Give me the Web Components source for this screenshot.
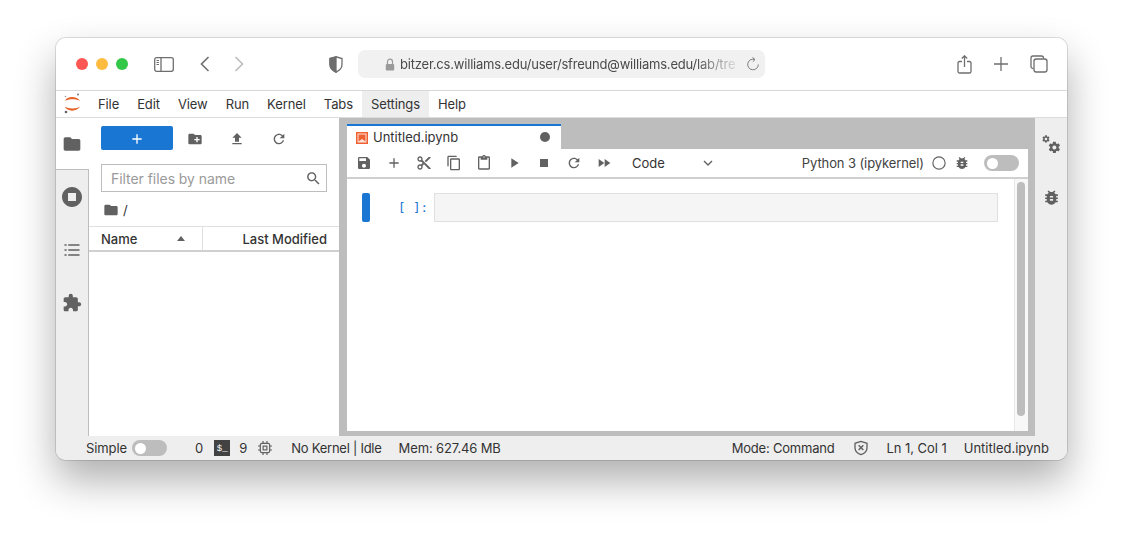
<!DOCTYPE html>
<html lang="en">
<head>
<meta charset="utf-8">
<title>JupyterLab</title>
<style>
  html, body { margin: 0; padding: 0; background: #fff; }
  body { padding: 38px 56px 0; height: 496px; overflow: hidden; font: 13px Inter, "Liberation Sans", sans-serif; color: #333; }
</style>
</head>
<body>
<app-window></app-window>
<script>
const GEAR = 'M19.43 12.98c.04-.32.07-.64.07-.98s-.03-.66-.07-.98l2.11-1.65c.19-.15.24-.42.12-.64l-2-3.46c-.12-.22-.39-.3-.61-.22l-2.49 1c-.52-.4-1.08-.73-1.69-.98l-.38-2.65C14.46 2.18 14.25 2 14 2h-4c-.25 0-.46.18-.49.42l-.38 2.65c-.61.25-1.17.59-1.69.98l-2.49-1c-.23-.09-.49 0-.61.22l-2 3.46c-.13.22-.07.49.12.64l2.11 1.65c-.04.32-.07.65-.07.98s.03.66.07.98l-2.11 1.65c-.19.15-.24.42-.12.64l2 3.46c.12.22.39.3.61.22l2.49-1c.52.4 1.08.73 1.69.98l.38 2.65c.03.24.24.42.49.42h4c.25 0 .46-.18.49-.42l.38-2.65c.61-.25 1.17-.59 1.69-.98l2.49 1c.23.09.49 0 .61-.22l2-3.46c.12-.22.07-.49-.12-.64l-2.11-1.65zM12 15.5c-1.93 0-3.5-1.57-3.5-3.5s1.57-3.5 3.5-3.5 3.5 1.57 3.5 3.5-1.57 3.5-3.5 3.5z';
const ICONS = {
    folder: '<path d="M10 4H4c-1.1 0-1.99.9-1.99 2L2 18c0 1.1.9 2 2 2h16c1.1 0 2-.9 2-2V8c0-1.1-.9-2-2-2h-8l-2-2z"/>',
    newfolder: '<path d="M20 6h-8l-2-2H4c-1.11 0-1.99.89-1.99 2L2 18c0 1.11.89 2 2 2h16c1.11 0 2-.89 2-2V8c0-1.11-.89-2-2-2zm-1 8h-3v3h-2v-3h-3v-2h3V9h2v3h3v2z"/>',
    upload: '<path d="M9 16h6v-6h4l-7-7-7 7h4zm-4 2h14v2H5z"/>',
    refresh: '<path d="M17.65 6.35C16.2 4.9 14.21 4 12 4c-4.42 0-7.99 3.58-7.99 8s3.57 8 7.99 8c3.73 0 6.84-2.55 7.73-6h-2.08c-.82 2.33-3.04 4-5.65 4-3.31 0-6-2.69-6-6s2.69-6 6-6c1.66 0 3.14.69 4.22 1.78L13 11h7V4l-2.35 2.35z"/>',
    save: '<path d="M17 3H5c-1.11 0-2 .9-2 2v14c0 1.1.89 2 2 2h14c1.1 0 2-.9 2-2V7l-4-4zm-5 16c-1.66 0-3-1.34-3-3s1.34-3 3-3 3 1.34 3 3-1.34 3-3 3zm3-10H5V5h10v4z"/>',
    add: '<path d="M19 13h-6v6h-2v-6H5v-2h6V5h2v6h6v2z"/>',
    cut: '<path d="M9.64 7.64c.23-.5.36-1.05.36-1.64 0-2.21-1.79-4-4-4S2 3.79 2 6s1.79 4 4 4c.59 0 1.14-.13 1.64-.36L10 12l-2.36 2.36C7.14 14.13 6.59 14 6 14c-2.21 0-4 1.79-4 4s1.79 4 4 4 4-1.79 4-4c0-.59-.13-1.14-.36-1.64L12 14l7 7h3v-1L9.64 7.64zM6 8c-1.1 0-2-.89-2-2s.9-2 2-2 2 .89 2 2-.9 2-2 2zm0 12c-1.1 0-2-.89-2-2s.9-2 2-2 2 .89 2 2-.9 2-2 2zm6-7.5c-.28 0-.5-.22-.5-.5s.22-.5.5-.5.5.22.5.5-.22.5-.5.5zM19 3l-6 6 2 2 7-7V3z"/>',
    copy: '<path d="M16 1H4c-1.1 0-2 .9-2 2v14h2V3h12V1zm3 4H8c-1.1 0-2 .9-2 2v14c0 1.1.9 2 2 2h11c1.1 0 2-.9 2-2V7c0-1.1-.9-2-2-2zm0 16H8V7h11v14z"/>',
    paste: '<path d="M19 2h-4.18C14.4.84 13.3 0 12 0c-1.3 0-2.4.84-2.82 2H5c-1.1 0-2 .9-2 2v16c0 1.1.9 2 2 2h14c1.1 0 2-.9 2-2V4c0-1.1-.9-2-2-2zm-7 0c.55 0 1 .45 1 1s-.45 1-1 1-1-.45-1-1 .45-1 1-1zm7 18H5V4h2v3h10V4h2v16z"/>',
    run: '<path d="M8 5v14l11-7z"/>',
    stop: '<path d="M6 6h12v12H6z"/>',
    ff: '<path d="M4 18l8.5-6L4 6v12zm9-12v12l8.5-6L13 6z"/>',
    bug: '<path d="M20 8h-2.81c-.45-.78-1.07-1.45-1.82-1.96L17 4.41 15.59 3l-2.17 2.17C12.96 5.06 12.49 5 12 5c-.49 0-.96.06-1.41.17L8.41 3 7 4.41l1.62 1.63C7.88 6.55 7.26 7.22 6.81 8H4v2h2.09c-.05.33-.09.66-.09 1v1H4v2h2v1c0 .34.04.67.09 1H4v2h2.81c1.04 1.79 2.97 3 5.19 3s4.15-1.21 5.19-3H20v-2h-2.09c.05-.33.09-.66.09-1v-1h2v-2h-2v-1c0-.34-.04-.67-.09-1H20V8zm-6 8h-4v-2h4v2zm0-4h-4v-2h4v2z"/>',
    stopcircle: '<path d="M12 2C6.48 2 2 6.48 2 12s4.48 10 10 10 10-4.48 10-10S17.52 2 12 2zm4 14H8V8h8v8z"/>',
    list: '<path d="M3 5h2.5v2H3zM7.5 5H21v2H7.5zM3 11h2.5v2H3zM7.5 11H21v2H7.5zM3 17h2.5v2H3zM7.5 17H21v2H7.5z"/>',
    extension: '<path d="M20.5 11H19V7c0-1.1-.9-2-2-2h-4V3.5C13 2.12 11.88 1 10.5 1S8 2.12 8 3.5V5H4c-1.1 0-1.99.9-1.99 2v3.8H3.5c1.49 0 2.7 1.21 2.7 2.7s-1.21 2.7-2.7 2.7H2V20c0 1.1.9 2 2 2h3.8v-1.5c0-1.49 1.21-2.7 2.7-2.7 1.49 0 2.7 1.21 2.7 2.7V22H17c1.1 0 2-.9 2-2v-4h1.5c1.38 0 2.5-1.12 2.5-2.5S21.88 11 20.5 11z"/>',
    search: '<path d="M15.5 14h-.79l-.28-.27C15.41 12.59 16 11.11 16 9.5 16 5.91 13.09 3 9.5 3S3 5.91 3 9.5 5.91 16 9.5 16c1.61 0 3.09-.59 4.23-1.57l.27.28v.79l5 4.99L20.49 19l-4.99-5zm-6 0C7.01 14 5 11.99 5 9.5S7.01 5 9.5 5 14 7.01 14 9.5 11.99 14 9.5 14z"/>',
    gears: `<g transform="translate(7 7) scale(.72)"><path d="${GEAR}"/></g><g transform="translate(-.5 -.5) scale(.46)"><path d="${GEAR}"/></g>`,
    chevron: '<path d="M6 9l6 6 6-6" fill="none" stroke="currentColor" stroke-width="2"/>',
    circle: '<circle cx="12" cy="12" r="10.5" fill="none" stroke="currentColor" stroke-width="2"/>',
    chip: '<rect x="5" y="5" width="14" height="14" rx="2.500" fill="none" stroke="currentColor" stroke-width="1.800"/><rect x="9.200" y="9.200" width="5.600" height="5.600" fill="none" stroke="currentColor" stroke-width="1.800"/><path d="M9 1.500v3M15 1.500v3M9 19.500v3M15 19.500v3M1.500 9h3M1.500 15h3M19.500 9h3M19.500 15h3" stroke="currentColor" stroke-width="1.800"/>',
    shieldx: '<path d="M12 2L3 5v6.500c0 5 3.800 8.800 9 10.500 5.200-1.700 9-5.500 9-10.500V5z" fill="none" stroke="currentColor" stroke-width="2"/><path d="M8.500 8l7 7M15.500 8l-7 7" stroke="currentColor" stroke-width="2.200"/>',
    notebook: '<path d="M0 0h24v24H0z" fill="#ef6133"/><path d="M3 3h18v18H3z" fill="#fbe3d9"/><path d="M5 5h14v14l-7-5-7 5z" fill="#ef6133"/>'
};

class JpIcon extends HTMLElement {
    connectedCallback() {
        const size = this.getAttribute('size') || 16;
        const color = this.getAttribute('color') || '#616161';
        this.attachShadow({ mode: 'open' }).innerHTML = `
        <style>
            :host { display: inline-flex; width: ${size}px; height: ${size}px; flex: none; color: ${color}; }
            svg { width: 100%; height: 100%; display: block; fill: currentColor; }
        </style>
        <svg viewBox="0 0 24 24">${ICONS[this.getAttribute('name')]}</svg>`;
    }
}
customElements.define('jp-icon', JpIcon);

class JpSwitch extends HTMLElement {
    connectedCallback() {
        this.attachShadow({ mode: 'open' }).innerHTML = `
        <style>
            :host { display: inline-flex; align-items: center; width: 35px; height: 16px; border-radius: 8px; background: #bdbdbd; box-sizing: border-box; padding-left: 3px; flex: none; }
            i { width: 11px; height: 11px; border-radius: 50%; background: #fff; display: block; }
        </style><i></i>`;
    }
}
customElements.define('jp-switch', JpSwitch);

class BrowserBar extends HTMLElement {
    constructor() {
        super();
        this.shadowDOM = this.attachShadow({ mode: 'open' });
    }
    connectedCallback() {
        this.shadowDOM.innerHTML = `
        <style>
            :host { display: flex; align-items: center; height: 52px; padding-left: 20px; border-bottom: 1px solid #d8d8d8; background: #fff; flex: none; }
            .lights { display: flex; gap: 8px; }
            .lights i { width: 12px; height: 12px; border-radius: 50%; display: block; }
            svg { display: block; flex: none; fill: none; stroke: #6e6e6e; stroke-width: 1.3; }
            .sidebar { margin-left: 26px; }
            .back { margin-left: 26px; }
            .fwd { margin-left: 24px; stroke: #bcbcbc; }
            .shield { margin-left: 85px; }
            .url { margin-left: 15px; width: 407px; height: 28px; border-radius: 7px; background: #f1f1f1; display: flex; align-items: center; padding-left: 27px; box-sizing: border-box; color: #4a4a4a; }
            .url span { margin-left: 5px; letter-spacing: -.2px; white-space: nowrap; -webkit-mask-image: linear-gradient(90deg, #000 88%, rgba(0,0,0,.15) 100%); mask-image: linear-gradient(90deg, #000 88%, rgba(0,0,0,.15) 100%); }
            .reload { margin-left: auto; margin-right: 5px; stroke: #7a7a7a; stroke-width: 1; }
            .share { margin-left: 192px; }
            .plus { margin-left: 22px; }
            .tabs { margin-left: 22px; }
        </style>
        <div class="lights">
            <i style="background:#fc5753"></i><i style="background:#fdbc40"></i><i style="background:#33c748"></i>
        </div>
        <svg class="sidebar" width="20" height="15" viewBox="0 0 20 15"><rect x=".7" y=".7" width="18.600" height="13.600" rx="2"/><path d="M7 .7v13.600"/><path d="M2.500 3.500h2.500M2.500 5.500h2.500M2.500 7.500h2.500" stroke-width="1"/></svg>
        <svg class="back" width="10" height="16" viewBox="0 0 10 16"><path d="M8.500 1L1.500 8l7 7" stroke-width="1.600"/></svg>
        <svg class="fwd" width="10" height="16" viewBox="0 0 10 16"><path d="M1.500 1l7 7-7 7" stroke-width="1.600"/></svg>
        <svg class="shield" width="14" height="17" viewBox="0 0 14 17"><path d="M7 .8L1 2.500v6c0 3.600 2.600 6 6 7.700 3.400-1.700 6-4.100 6-7.700v-6z"/><path d="M7 .8L1 2.500v6c0 3.600 2.600 6 6 7.700z" fill="#6e6e6e"/></svg>
        <div class="url">
            <svg width="10" height="13" viewBox="0 0 10 13" style="stroke:#9a9a9a"><path d="M2.500 6V3.700a2.500 2.500 0 0 1 5 0V6" stroke-width="1.200"/><rect x=".8" y="6" width="8.400" height="6.400" rx="1" fill="#9a9a9a" stroke="none"/></svg>
            <span>bitzer.cs.williams.edu/user/sfreund@williams.edu/lab/tre</span>
            <svg class="reload" width="14" height="15" viewBox="0 0 14 15"><path d="M8.500 2.400A5.300 5.300 0 1 0 12.300 7.500"/><path d="M6.500 .5L9 2.500 6.800 4.700"/></svg>
        </div>
        <svg class="share" width="15" height="19" viewBox="0 0 15 19"><path d="M5 6.500H2.500a1.500 1.500 0 0 0-1.500 1.500v8.500A1.500 1.500 0 0 0 2.500 18h10a1.500 1.500 0 0 0 1.500-1.500V8a1.500 1.500 0 0 0-1.500-1.500H10"/><path d="M7.500 12V1M4.800 3.500L7.500 .8l2.700 2.700"/></svg>
        <svg class="plus" width="14" height="14" viewBox="0 0 14 14"><path d="M7 0v14M0 7h14"/></svg>
        <svg class="tabs" width="18" height="18" viewBox="0 0 18 18"><path d="M3.500 13.500H3A2 2 0 0 1 1 11.500V3a2 2 0 0 1 2-2h8.500a2 2 0 0 1 2 2v.5"/><rect x="4" y="4" width="13" height="13" rx="2.200"/></svg>`;
    }
}
customElements.define('browser-bar', BrowserBar);

class MenuBar extends HTMLElement {
    connectedCallback() {
        const items = ['File', 'Edit', 'View', 'Run', 'Kernel', 'Tabs', 'Settings', 'Help'];
        this.attachShadow({ mode: 'open' }).innerHTML = `
        <style>
            :host { display: flex; height: 26px; background: #fff; flex: none; border-bottom: 1px solid #dcdcdc; padding-left: 7px; letter-spacing: -.1px; }
            svg { width: 18px; height: 21px; margin: 2px 8px 0 0; flex: none; display: block; }
            span { padding: 0 9px; line-height: 27px; color: #333; }
            .on { background: #eeeeee; }
        </style>
        <svg viewBox="0 0 18 21">
            <path d="M2 8C3.500 2.500 14.500 2.500 17 8 14 5.500 5 5.500 2 8zM2 13.500C5 16 14 16 17 13.500 14.500 19 3.500 19 2 13.500z" fill="#e8632a"/>
            <circle cx="15" cy="1.500" r="1" fill="#757575"/><circle cx="2.500" cy="3.500" r=".8" fill="#9a9a9a"/><circle cx="3" cy="19" r="1.300" fill="#616161"/>
        </svg>
        ${items.map(t => `<span class="${t === 'Settings' ? 'on' : ''}">${t}</span>`).join('')}`;
    }
}
customElements.define('menu-bar', MenuBar);

class SideRail extends HTMLElement {
    connectedCallback() {
        this.attachShadow({ mode: 'open' }).innerHTML = `
        <style>
            :host { display: flex; flex-direction: column; width: 33px; box-sizing: border-box; background: #eeeeee; border-right: 1px solid #bdbdbd; flex: none; }
            div { height: 53px; display: flex; align-items: center; justify-content: center; box-sizing: border-box; }
            .active { height: 52px; background: #fff; border-bottom: 1px solid #bdbdbd; margin-right: -1px; padding-right: 1px; }
        </style>
        <div class="active"><jp-icon name="folder" size="20"></jp-icon></div>
        <div><jp-icon name="stopcircle" size="24"></jp-icon></div>
        <div><jp-icon name="list" size="20"></jp-icon></div>
        <div><jp-icon name="extension" size="20"></jp-icon></div>`;
    }
}
customElements.define('side-rail', SideRail);

class FileBrowser extends HTMLElement {
    connectedCallback() {
        this.attachShadow({ mode: 'open' }).innerHTML = `
        <style>
            :host { display: flex; flex-direction: column; width: 250px; background: #fff; flex: none; }
            .tools { display: flex; align-items: center; height: 24px; padding: 8px 0 0 12px; }
            .new { width: 72px; height: 24px; background: #1976d2; border-radius: 2px; display: flex; align-items: center; justify-content: center; margin-right: 14px; }
            .tools jp-icon { margin: 2px 26px 0 0; }
            .tools .new jp-icon { margin: 2px 0 0 0; }
            .filter { margin: 14px 12px 0; height: 28px; box-sizing: border-box; border: 1px solid #bdbdbd; display: flex; align-items: center; justify-content: space-between; padding: 0 4px 0 9px; color: #9a9a9a; font-size: 14px; letter-spacing: -.05px; }
            .crumb { display: flex; align-items: center; gap: 4px; height: 34px; box-sizing: border-box; padding: 2px 0 0 14px; color: #333; }
            .head { display: flex; height: 26px; box-sizing: border-box; border-top: 1px solid #e0e0e0; border-bottom: 2px solid #d0d0d0; font-weight: 500; color: #333; line-height: 24px; }
            .name { padding-left: 12px; border-right: 1px solid #e0e0e0; display: flex; align-items: center; justify-content: space-between; padding-right: 17px; width: 84px; }
            .caret { width: 0; height: 0; border: 4.500px solid transparent; border-top: 0; border-bottom: 5px solid #616161; }
            .mod { flex: 1; text-align: right; padding-right: 12px; }
        </style>
        <div class="tools">
            <div class="new"><jp-icon name="add" size="16" color="#fff"></jp-icon></div>
            <jp-icon name="newfolder" size="16"></jp-icon>
            <jp-icon name="upload" size="16"></jp-icon>
            <jp-icon name="refresh" size="16"></jp-icon>
        </div>
        <div class="filter"><span>Filter files by name</span><jp-icon name="search" size="17"></jp-icon></div>
        <div class="crumb"><jp-icon name="folder" size="16"></jp-icon><span>/</span></div>
        <div class="head">
            <div class="name"><span>Name</span><i class="caret"></i></div>
            <div class="mod">Last Modified</div>
        </div>`;
    }
}
customElements.define('file-browser', FileBrowser);

class NotebookTab extends HTMLElement {
    connectedCallback() {
        this.attachShadow({ mode: 'open' }).innerHTML = `
        <style>
            :host { display: flex; align-items: center; width: 214px; height: 23px; border-top: 2px solid #1976d2; background: #fff; flex: none; }
            jp-icon { margin: 0 5px 0 9px; }
            span { flex: 1; padding-bottom: 2px; }
            i { width: 10px; height: 10px; border-radius: 50%; background: #616161; margin-right: 11px; margin-bottom: 1px; }
        </style>
        <jp-icon name="notebook" size="12"></jp-icon><span><slot></slot></span><i></i>`;
    }
}
customElements.define('notebook-tab', NotebookTab);

class NotebookToolbar extends HTMLElement {
    connectedCallback() {
        const names = ['save', 'add', 'cut', 'copy', 'paste', 'run', 'stop', 'refresh', 'ff'];
        this.attachShadow({ mode: 'open' }).innerHTML = `
        <style>
            :host { display: flex; align-items: center; height: 28px; border-bottom: 2px solid #d0d0d0; padding-left: 9px; background: #fff; flex: none; }
            .btns { display: flex; gap: 14px; }
            .type { width: 68px; margin-left: 20px; color: #333; }
            .kernel { margin-left: auto; margin-right: 8px; color: #424242; letter-spacing: -.1px; }
            .tail { margin-right: 9px; }
        </style>
        <div class="btns">${names.map(n => `<jp-icon name="${n}" size="16"></jp-icon>`).join('')}</div>
        <span class="type">Code</span>
        <jp-icon name="chevron" size="16"></jp-icon>
        <span class="kernel">Python 3 (ipykernel)</span>
        <jp-icon name="circle" size="14" style="margin-right:8px"></jp-icon>
        <jp-icon name="bug" size="16" style="margin-right:14px"></jp-icon>
        <jp-switch class="tail"></jp-switch>`;
    }
}
customElements.define('notebook-toolbar', NotebookToolbar);

class CodeCell extends HTMLElement {
    connectedCallback() {
        this.attachShadow({ mode: 'open' }).innerHTML = `
        <style>
            :host { display: flex; padding: 14px 16px 0 15px; flex: 1; min-width: 0; }
            .bar { width: 8px; height: 29px; background: #1976d2; border-radius: 2px; flex: none; }
            .prompt { width: 64px; padding-right: 6px; box-sizing: border-box; text-align: right; font: 12.500px/29px "DejaVu Sans Mono", monospace; color: #1976d2; flex: none; }
            .input { flex: 1; height: 29px; box-sizing: border-box; background: #f5f5f5; border: 1px solid #e0e0e0; }
        </style>
        <div class="bar"></div><div class="prompt">[ ]:</div><div class="input"></div>`;
    }
}
customElements.define('code-cell', CodeCell);

class NotebookPanel extends HTMLElement {
    connectedCallback() {
        this.attachShadow({ mode: 'open' }).innerHTML = `
        <style>
            :host { display: flex; flex-direction: column; flex: 1; min-width: 0; padding: 6px 7px 5px 8px; background: #bdbdbd; }
            .body { flex: 1; display: flex; background: #fff; min-height: 0; }
            .scroll { width: 14px; border-left: 1px solid #e8e8e8; box-sizing: border-box; padding: 3px 3px 15px 2px; flex: none; background: #f8f8f8; }
            .scroll i { display: block; height: 100%; border-radius: 4px; background: #bdbdbd; }
        </style>
        <notebook-tab>Untitled.ipynb</notebook-tab>
        <notebook-toolbar></notebook-toolbar>
        <div class="body">
            <code-cell></code-cell>
            <div class="scroll"><i></i></div>
        </div>`;
    }
}
customElements.define('notebook-panel', NotebookPanel);

class RightRail extends HTMLElement {
    connectedCallback() {
        this.attachShadow({ mode: 'open' }).innerHTML = `
        <style>
            :host { display: flex; flex-direction: column; width: 32px; background: #eeeeee; flex: none; }
            div { height: 53px; display: flex; align-items: center; justify-content: center; }
        </style>
        <div><jp-icon name="gears" size="19"></jp-icon></div>
        <div><jp-icon name="bug" size="19"></jp-icon></div>`;
    }
}
customElements.define('right-rail', RightRail);

class StatusBar extends HTMLElement {
    connectedCallback() {
        this.attachShadow({ mode: 'open' }).innerHTML = `
        <style>
            :host { display: flex; align-items: center; height: 24px; background: #eeeeee; padding: 0 18px 0 30px; flex: none; color: #333; white-space: nowrap; }
            .term { width: 16px; height: 16px; background: #424242; color: #fff; font: 9px/18px "Liberation Mono", monospace; text-align: center; margin: 0 9px 0 11px; flex: none; }
            .right { margin-left: auto; display: flex; align-items: center; }
        </style>
        <span style="margin-right:5px;letter-spacing:-.1px">Simple</span>
        <jp-switch></jp-switch>
        <span style="margin-left:28px">0</span>
        <span class="term">$_</span>
        <span>9</span>
        <jp-icon name="chip" size="16" style="margin:0 18px 0 10px"></jp-icon>
        <span style="letter-spacing:-.25px">No Kernel | Idle</span>
        <span style="margin-left:17px;letter-spacing:-.13px">Mem: 627.46 MB</span>
        <div class="right">
            <span style="letter-spacing:-.2px">Mode: Command</span>
            <jp-icon name="shieldx" size="16" style="margin:0 18px"></jp-icon>
            <span style="letter-spacing:-.05px">Ln 1, Col 1</span>
            <span style="margin-left:17px">Untitled.ipynb</span>
        </div>`;
    }
}
customElements.define('status-bar', StatusBar);

class AppWindow extends HTMLElement {
    connectedCallback() {
        this.attachShadow({ mode: 'open' }).innerHTML = `
        <style>
            :host { display: flex; flex-direction: column; width: 1011px; height: 422px; border-radius: 10px; overflow: hidden; background: #fff; box-shadow: 0 0 0 1px rgba(0,0,0,.12), 0 20px 40px rgba(0,0,0,.32); }
            main { flex: 1; display: flex; min-height: 0; }
        </style>
        <browser-bar></browser-bar>
        <menu-bar></menu-bar>
        <main>
            <side-rail></side-rail>
            <file-browser></file-browser>
            <notebook-panel></notebook-panel>
            <right-rail></right-rail>
        </main>
        <status-bar></status-bar>`;
    }
}
customElements.define('app-window', AppWindow);
</script>
</body>
</html>
